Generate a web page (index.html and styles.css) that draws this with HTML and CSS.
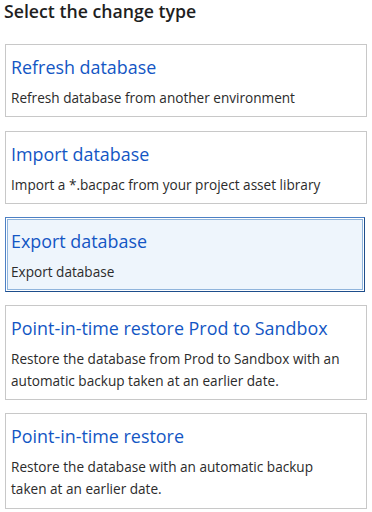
FILE: index.html
```html
<!DOCTYPE html>
<html lang="en">
<head>
<meta charset="utf-8">
<title>Select the change type</title>
<link rel="stylesheet" href="styles.css">
</head>
<body>
<main class="page">
  <h1 class="heading">Select the change type</h1>
  <ul class="options">
    <li class="option">
      <div class="option-title">Refresh database</div>
      <div class="option-desc">Refresh database from another environment</div>
    </li>
    <li class="option">
      <div class="option-title">Import database</div>
      <div class="option-desc">Import a *.bacpac from your project asset library</div>
    </li>
    <li class="option option--selected">
      <div class="option-title">Export database</div>
      <div class="option-desc">Export database</div>
    </li>
    <li class="option">
      <div class="option-title">Point-in-time restore Prod to Sandbox</div>
      <div class="option-desc">Restore the database from Prod to Sandbox with an automatic backup taken at an earlier date.</div>
    </li>
    <li class="option option--last">
      <div class="option-title">Point-in-time restore</div>
      <div class="option-desc">Restore the database with an automatic backup taken at an earlier date.</div>
    </li>
  </ul>
</main>
</body>
</html>
```
FILE: styles.css
```css
html, body {
  margin: 0;
  padding: 0;
  background: #ffffff;
}
body {
  font-family: "Open Sans", "Noto Sans", sans-serif;
  color: #262626;
}
.page {
  padding: 0 5px 0 5px;
  width: 362px;
}
.heading {
  margin: 0 0 0 -1px;
  font-size: 17.7px;
  font-weight: 600;
  line-height: 22px;
  color: #1f1f1f;
}
.options {
  list-style: none;
  margin: 22px 0 0 0;
  padding: 0;
  display: flex;
  flex-direction: column;
  gap: 13px;
}
.option {
  border: 1px solid #c8c8c8;
  padding: 10px 20px 7px 5px;
  display: flex;
  flex-direction: column;
  gap: 8px;
}
.option:first-child {
  margin-bottom: 1px;
}
.option--selected {
  border: 1px solid;
  border-color: #4d80c4 #1e4e8c #1e4e8c #4d80c4;
  box-shadow: inset 0 0 0 1px #ffffff, inset 0 0 0 2px #8fb4dc;
  background: #eef5fc;
  padding-top: 11px;
  padding-bottom: 8px;
  margin-right: 2px;
}
.option--last {
  padding-bottom: 8px;
}
.option-title {
  font-size: 17.9px;
  line-height: 24px;
  color: #1356c4;
}
.option-desc {
  font-size: 13.6px;
  line-height: 22px;
  color: #2b2b2b;
}
```
